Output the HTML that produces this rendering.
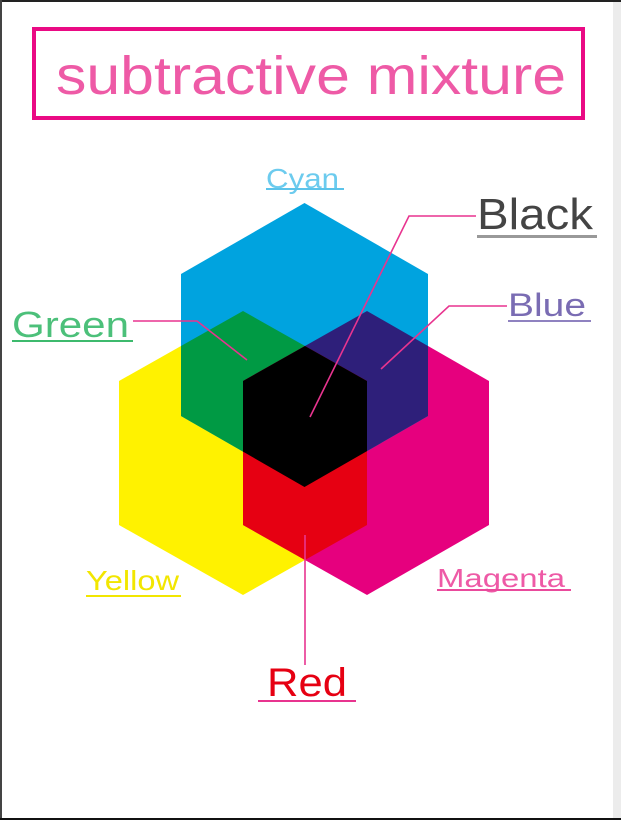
<!DOCTYPE html>
<html><head><meta charset="utf-8"><style>
html,body{margin:0;padding:0;width:621px;height:820px;overflow:hidden;background:#fff;}
svg{display:block}
</style></head><body>
<svg width="621" height="820" viewBox="0 0 621 820" xmlns="http://www.w3.org/2000/svg" font-family="Liberation Sans, sans-serif">
<defs>
<clipPath id="cy"><polygon points="304.5,203 428,274 428,416 304.5,487 181,416 181,274"/></clipPath>
<clipPath id="ye"><polygon points="243,311 367,381 367,525 243,595 119,525 119,381"/></clipPath>
<clipPath id="ma"><polygon points="367,311 489,381 489,525 367,595 243,525 243,381"/></clipPath>
</defs>
<rect x="0" y="0" width="621" height="820" fill="#fff"/>
<rect x="613" y="0" width="8" height="820" fill="#ececec"/>
<rect x="0" y="0" width="621" height="2" fill="#222"/>
<rect x="0" y="0" width="2" height="820" fill="#444"/>
<rect x="0" y="818" width="621" height="2" fill="#111"/>
<rect x="34" y="29" width="549" height="89" fill="none" stroke="#ea0a84" stroke-width="4"/>
<text x="56" y="94" font-size="54" fill="#ee5aa6" textLength="510" lengthAdjust="spacingAndGlyphs">subtractive mixture</text>
<polygon points="243,311 367,381 367,525 243,595 119,525 119,381" fill="#fff200"/>
<polygon points="367,311 489,381 489,525 367,595 243,525 243,381" fill="#e6007e"/>
<polygon points="304.5,203 428,274 428,416 304.5,487 181,416 181,274" fill="#00a3df"/>
<g clip-path="url(#cy)"><polygon points="243,311 367,381 367,525 243,595 119,525 119,381" fill="#009a44"/><polygon points="367,311 489,381 489,525 367,595 243,525 243,381" fill="#2e1f7a"/></g>
<g clip-path="url(#ye)"><polygon points="367,311 489,381 489,525 367,595 243,525 243,381" fill="#e60012"/></g>
<g clip-path="url(#ye)"><g clip-path="url(#ma)"><polygon points="304.5,203 428,274 428,416 304.5,487 181,416 181,274" fill="#000"/></g></g>
<g fill="none" stroke="#e8348f" stroke-width="1.6">
<polyline points="476,216 409,216 310,417"/>
<polyline points="507,306 449,306 381,369"/>
<polyline points="133,321 197,321 247,360"/>
<line x1="305" y1="535" x2="305" y2="665"/>
</g>
<text x="266" y="188" font-size="28" fill="#6ccbee" textLength="73" lengthAdjust="spacingAndGlyphs">Cyan</text>
<rect x="266" y="188" width="78" height="2" fill="#5bc3ea"/>
<text x="477" y="229" font-size="44" fill="#444" textLength="116" lengthAdjust="spacingAndGlyphs">Black</text>
<rect x="477" y="235" width="120" height="3" fill="#999"/>
<text x="508" y="316" font-size="32" fill="#7a6cb3" textLength="78" lengthAdjust="spacingAndGlyphs">Blue</text>
<rect x="508" y="320" width="83" height="2" fill="#8f82c0"/>
<text x="12" y="337" font-size="36" fill="#4cc07a" textLength="117" lengthAdjust="spacingAndGlyphs">Green</text>
<rect x="12" y="340" width="121" height="2" fill="#3dba6d"/>
<text x="86" y="590" font-size="28" fill="#f2e600" textLength="93" lengthAdjust="spacingAndGlyphs">Yellow</text>
<rect x="86" y="595" width="95" height="2" fill="#f2e600"/>
<text x="437" y="587" font-size="26" fill="#ee5aa6" textLength="128" lengthAdjust="spacingAndGlyphs">Magenta</text>
<rect x="437" y="589" width="134" height="2" fill="#ea4a9c"/>
<text x="267" y="696" font-size="40" fill="#e60012" textLength="80" lengthAdjust="spacingAndGlyphs">Red</text>
<rect x="258" y="700" width="98" height="2" fill="#e8348f"/>
</svg>
</body></html>
